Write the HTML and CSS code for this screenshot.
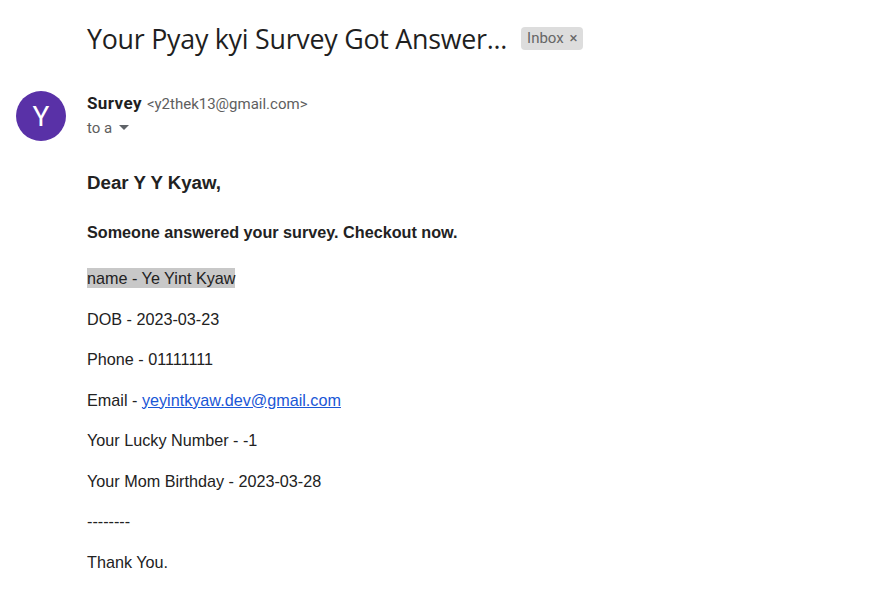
FILE: index.html
```html
<!DOCTYPE html>
<html>
<head>
<meta charset="utf-8">
<link rel="stylesheet" href="styles.css">
</head>
<body>
<div class="page">
  <div class="subject-row">
    <h1 class="subject">Your Pyay kyi Survey Got Answer...</h1>
    <span class="label">Inbox <span class="label-x">×</span></span>
  </div>
  <div class="message">
    <div class="avatar">Y</div>
    <div class="content">
      <div class="sender">
        <span class="sender-name">Survey</span>
        <span class="sender-email">&lt;y2thek13@gmail.com&gt;</span>
      </div>
      <div class="recipients">to a <svg class="caret" width="10" height="6" viewBox="0 0 10 6"><path d="M0 0h10L5 5z" fill="#5f6368"/></svg></div>
      <div class="body">
        <h3 class="greeting">Dear Y Y Kyaw,</h3>
        <h4 class="intro">Someone answered your survey. Checkout now.</h4>
        <p class="first"><span class="hl">name - Ye Yint Kyaw</span></p>
        <p>DOB - 2023-03-23</p>
        <p>Phone - 01111111</p>
        <p>Email - <a href="#">yeyintkyaw.dev@gmail.com</a></p>
        <p>Your Lucky Number - -1</p>
        <p>Your Mom Birthday - 2023-03-28</p>
        <p>--------</p>
        <p>Thank You.</p>
      </div>
    </div>
  </div>
</div>
</body>
</html>
```
FILE: styles.css
```css
html, body {
  margin: 0;
  padding: 0;
  background: #fff;
}
.page {
  padding: 18px 0 0 16px;
}
.subject-row {
  display: flex;
  align-items: center;
  padding-left: 71px;
  gap: 14px;
  height: 40px;
}
.subject {
  margin: 0;
  font-family: "Open Sans", sans-serif;
  font-weight: 400;
  font-size: 26.8px;
  color: #1f1f1f;
  letter-spacing: -0.25px;
}
.label {
  background: #dddddd;
  color: #666;
  font-family: Roboto, "Liberation Sans", sans-serif;
  font-size: 15px;
  padding: 2px 6px 3px 6px;
  border-radius: 4px;
  line-height: 18px;
}
.label-x {
  font-size: 15px;
  margin-left: 2px;
}
.message {
  display: flex;
  margin-top: 33px;
}
.avatar {
  width: 50px;
  height: 50px;
  border-radius: 50%;
  background: #5931a7;
  color: #fff;
  font-family: Roboto, sans-serif;
  font-size: 28px;
  display: flex;
  align-items: center;
  justify-content: center;
  flex-shrink: 0;
}
.content {
  margin-left: 21px;
  padding-top: 1px;
}
.sender {
  font-family: Roboto, sans-serif;
  line-height: 22px;
}
.sender-name {
  font-weight: 700;
  font-size: 17px;
  color: #1f1f1f;
  letter-spacing: 0.4px;
}
.sender-email {
  font-size: 15px;
  color: #5e5e5e;
  margin-left: 1px;
}
.recipients {
  font-family: Roboto, sans-serif;
  font-size: 15px;
  color: #5e5e5e;
  line-height: 20px;
  margin-top: 3px;
  display: flex;
  align-items: center;
}
.caret {
  margin-left: 7px;
}
.body {
  font-family: "Liberation Sans", Arial, sans-serif;
  font-size: 16.2px;
  color: #222;
  padding-top: 33px;
}
.greeting {
  margin: 0;
  font-size: 18.7px;
  font-weight: 700;
  line-height: 24px;
}
.intro {
  margin: 25px 0 0 0;
  font-size: 16.2px;
  font-weight: 700;
  line-height: 24px;
}
.body p {
  margin: 16.5px 0 0 0;
  line-height: 24px;
}
.body p.first {
  margin-top: 22px;
}
.hl {
  background: #c8c8c8;
  padding: 1px 0;
}
.body a {
  color: #1a57d6;
  text-decoration: underline;
}
```
